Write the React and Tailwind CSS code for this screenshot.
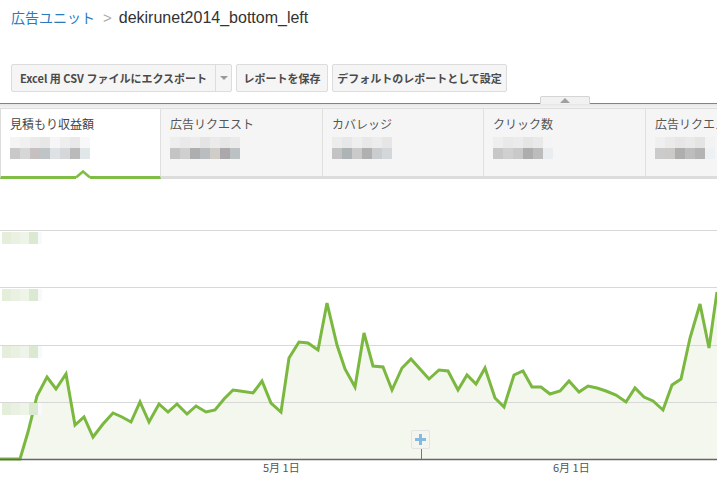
import React from 'react';

const jp = { fontFamily: '"Noto Sans CJK JP", "Liberation Sans", sans-serif' };

const linePts = [
  [0, 459], [20, 459], [28, 432], [37, 396], [47, 377], [56, 389], [66, 374], [75, 425], [84, 417], [93, 437],
  [103, 424], [113, 413], [122, 417], [131, 422], [140, 402], [149, 422], [159, 404], [168, 412], [177, 404],
  [187, 414], [196, 406], [206, 412], [215, 410], [224, 399], [233, 390], [240, 391], [253, 393], [262, 381],
  [271, 403], [281, 412], [289, 358], [299, 342], [308, 343], [318, 350], [327, 303], [337, 345], [345, 369],
  [355, 387], [364, 333], [373, 366], [383, 367], [392, 390], [402, 368], [411, 359], [420, 369], [429, 379],
  [439, 370], [448, 371], [458, 390], [467, 375], [476, 384], [485, 368], [495, 398], [504, 407], [514, 375],
  [523, 371], [532, 387], [541, 387], [550, 394], [560, 391], [569, 381], [579, 392], [588, 386], [597, 388],
  [606, 391], [616, 395], [626, 402], [635, 388], [644, 397], [653, 401], [663, 410], [672, 385], [681, 379],
  [690, 338], [700, 304], [709, 348], [717, 292],
];

const metrics = [
  {
    label: '見積もり収益額', w: 'w-[161px] border-r', active: true,
    top: ['#f4f4f4', '#f0f0f0', '#ebebeb', '#e7e7e7', '#f6f6f6', '#eeeeee', '#e9e9e9', '#f8f8f8'],
    bot: ['#c9c9c9', '#d6d6d6', '#c6c0c0', '#bfc4c6', '#dfe2e4', '#d5d7d9', '#bababa', '#e1e6e9'],
  },
  {
    label: '広告リクエスト', w: 'w-[162px] border-r',
    top: ['#eeeeee', '#e9e9e9', '#ececec', '#e4e4e4', '#ebebeb', '#e6e6e6', '#eaeaea'],
    bot: ['#c4c4c4', '#cfcfcf', '#aeaeae', '#b9bdbf', '#d0cdc8', '#aaa8aa', '#bcc2c4'],
  },
  {
    label: 'カバレッジ', w: 'w-[161px] border-r',
    top: ['#ececec', '#e7e7e7', '#eeeeee', '#e8e8e8', '#ececec', '#e6e6e6'],
    bot: ['#c3c3c3', '#aeb3b5', '#cacaca', '#b0b0b0', '#c9cdcf', '#d3d7d9'],
  },
  {
    label: 'クリック数', w: 'w-[162px] border-r',
    top: ['#eeeeee', '#e9e9e9', '#ebebeb', '#e5e5e5', '#e9e9e9', '#f4f4f4'],
    bot: ['#c7c7c7', '#d0d0d0', '#c9c9c9', '#adadad', '#bcbcbc', '#eaedf0'],
  },
  {
    label: '広告リクエスト', w: 'flex-1 min-w-0',
    top: ['#efefef', '#eaeaea', '#e6e6e6', '#e9e9e9', '#e4e4e4', '#f3f3f3'],
    bot: ['#cbcbcb', '#cdc9c6', '#aeaeae', '#bdbdbd', '#b4b4b4', '#eef1f4'],
  },
];

function Blur({ top, bot }) {
  return (
    <div className="mt-[4px] flex flex-col">
      <div className="flex">
        {top.map((c, i) => <div key={i} className="w-[10px] h-[11px] shrink-0" style={{ background: c }} />)}
      </div>
      <div className="flex">
        {bot.map((c, i) => <div key={i} className="w-[10px] h-[11px] shrink-0" style={{ background: c }} />)}
      </div>
    </div>
  );
}

function AxisLabel() {
  const cs = ['#e4eedb', '#eaf1e2', '#eff4e9', '#dce9d1'];
  return (
    <div className="flex">
      {cs.map((c, i) => <div key={i} className="w-[9px] h-[12px]" style={{ background: c }} />)}
      <div className="w-[4px] h-[12px] bg-[#f7f9fc]" />
    </div>
  );
}

export default function App() {
  const pts = linePts.map(p => p.join(',')).join(' ');
  const area = `0,459 ${pts} 717,459`;

  return (
    <div className="w-[717px] h-[478px] overflow-hidden bg-white relative" style={jp}>
      {/* breadcrumb */}
      <div className="h-[64px] pl-[11px] pt-[6px] flex items-baseline">
        <span className="text-[14px] text-[#2a7ac0]" style={jp}>広告ユニット</span>
        <span className="ml-[8px] text-[15px] text-[#aaaaaa]" style={{ fontFamily: '"Liberation Sans", sans-serif' }}>&gt;</span>
        <span className="ml-[7px] text-[16px] text-[#333]" style={{ fontFamily: '"Liberation Sans", sans-serif' }}>dekirunet2014_bottom_left</span>
      </div>

      {/* action buttons */}
      <div className="h-[28px] pl-[11px] flex gap-[4px] text-[11px] font-bold text-[#4a4a4a]">
        <div className="flex w-[221px] h-[28px] bg-[#f5f5f5] border border-[#dcdcdc] rounded-[2px]">
          <div className="w-[203px] flex items-center justify-center whitespace-nowrap">Excel 用 CSV ファイルにエクスポート</div>
          <div className="flex-1 border-l border-[#dcdcdc] flex items-center justify-center">
            <div className="w-0 h-0 border-l-[4px] border-r-[4px] border-t-[4px] border-l-transparent border-r-transparent border-t-[#999]" />
          </div>
        </div>
        <div className="w-[92px] h-[28px] bg-[#f5f5f5] border border-[#dcdcdc] rounded-[2px] flex items-center justify-center whitespace-nowrap">レポートを保存</div>
        <div className="w-[175px] h-[28px] bg-[#f5f5f5] border border-[#dcdcdc] rounded-[2px] flex items-center justify-center whitespace-nowrap">デフォルトのレポートとして設定</div>
      </div>

      {/* collapse tab + blue rule */}
      <div className="h-[12px] flex items-end">
        <div className="w-[540px] h-full border-b border-[#4b8fd6]" />
        <div className="w-[50px] h-[8px] bg-[#f1f1f1] border border-b-0 border-[#d4d4d4] rounded-t-[2px] flex items-center justify-center">
          <div className="w-0 h-0 border-l-[5px] border-r-[5px] border-b-[5px] border-l-transparent border-r-transparent border-b-[#a0a0a0]" />
        </div>
        <div className="flex-1 h-full border-b border-[#4b8fd6]" />
      </div>
      <div className="h-[5px] bg-gradient-to-b from-[#e6e6e6] to-[#f4f4f4] border-b border-[#dddddd]" />

      {/* metric scorecards */}
      <div className="h-[70px] flex">
        {metrics.map((m, i) => (
          <div
            key={i}
            className={`${m.w} h-full relative pl-[9px] pt-[6px] border-r-[#e0e0e0] ${m.active ? 'bg-white border-l border-l-[#dddddd] border-b-[3px] border-b-[#80bd44]' : 'bg-[#f5f5f5] border-b-[3px] border-b-[#dcdcdc]'}`}
          >
            <div className={`text-[12px] leading-[18px] whitespace-nowrap ${m.active ? 'text-[#444]' : 'text-[#555]'}`}>{m.label}</div>
            <Blur top={m.top} bot={m.bot} />
            {m.active && (
              <svg className="absolute left-[75px] bottom-[-3px]" width="14" height="9" viewBox="0 0 14 9">
                <path d="M0 6 L7 0 L14 6 L14 9 L0 9 Z" fill="#ffffff" />
                <path d="M0 7.5 L7 1.5 L14 7.5" fill="none" stroke="#80bd44" strokeWidth="2.5" />
              </svg>
            )}
          </div>
        ))}
      </div>

      {/* chart */}
      <div className="relative h-[299px]">
        <svg width="717" height="299" viewBox="0 179 717 299" className="block">
          <polygon points={area} fill="#f3f7ee" />
          {[230, 287, 345, 402].map(y => (
            <line key={y} x1="0" x2="717" y1={y + 0.5} y2={y + 0.5} stroke="#d8d8d8" strokeWidth="1" />
          ))}
          <polyline points={pts} fill="none" stroke="#7ab83f" strokeWidth="3" strokeLinejoin="miter" />
          <line x1="0" x2="717" y1="459.5" y2="459.5" stroke="#666" strokeWidth="1.5" />
          <line x1="421.5" x2="421.5" y1="449" y2="459" stroke="#777" strokeWidth="1" />
        </svg>

        {/* blurred y-axis labels */}
        <div className="absolute left-[2px] top-[53px]"><AxisLabel /></div>
        <div className="absolute left-[2px] top-[110px]"><AxisLabel /></div>
        <div className="absolute left-[2px] top-[167px]"><AxisLabel /></div>
        <div className="absolute left-[2px] top-[224px]"><AxisLabel /></div>

        {/* annotation button */}
        <div className="absolute left-[411px] top-[251px] w-[19px] h-[19px] bg-[#f4f5ef] border border-[#e4e4e4] rounded-[2px] flex items-center justify-center">
          <svg width="11" height="11" viewBox="0 0 11 11">
            <rect x="4" y="0" width="3" height="11" fill="#86b9e0" />
            <rect x="0" y="4" width="11" height="3" fill="#86b9e0" />
          </svg>
        </div>

        {/* x-axis labels */}
        <div className="absolute left-[263px] top-[283px] text-[11px] text-[#555] leading-none">5月 1日</div>
        <div className="absolute left-[553px] top-[283px] text-[11px] text-[#555] leading-none">6月 1日</div>
      </div>
    </div>
  );
}
